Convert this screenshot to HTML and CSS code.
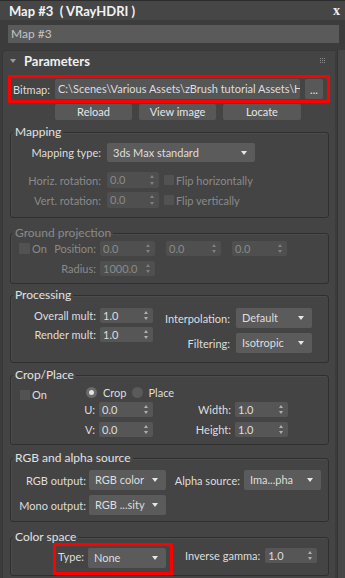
FILE: index.html
```html
<!DOCTYPE html>
<html lang="en">
<head>
<meta charset="utf-8">
<title>Map #3 ( VRayHDRI )</title>
<link rel="stylesheet" href="styles.css">
</head>
<body>

  <div class="titlebar">
    <span class="title">Map #3&nbsp; ( VRayHDRI )</span>
    <span class="close">x</span>
  </div>

  <div class="namebar">
    <div class="name-field">Map #3</div>
  </div>

  <div class="main">
    <div class="rollout">
      <div class="rollout-head">
        <span class="tri"></span>
        <span class="rollout-title">Parameters</span>
        <svg class="grip" width="6" height="6" viewBox="0 0 6 6">
          <g fill="#8a8a8a">
            <rect x="0" y="0" width="1" height="1"/><rect x="2" y="0" width="1" height="1"/><rect x="4" y="0" width="1" height="1"/>
            <rect x="0" y="2" width="1" height="1"/><rect x="2" y="2" width="1" height="1"/><rect x="4" y="2" width="1" height="1"/>
            <rect x="0" y="4" width="1" height="1"/><rect x="2" y="4" width="1" height="1"/><rect x="4" y="4" width="1" height="1"/>
          </g>
        </svg>
      </div>

      <div class="bitmap-row mark">
        <span class="bitmap-lab">Bitmap:</span>
        <div class="path-field">C:\Scenes\Various Assets\zBrush tutorial Assets\H</div>
        <div class="btn btn-dots">...</div>
      </div>

      <div class="btn-row">
        <div class="btn">Reload</div>
        <div class="btn">View image</div>
        <div class="btn btn-wide">Locate</div>
      </div>

      <fieldset class="group g-mapping">
        <legend>Mapping</legend>
        <div class="row r1">
          <span class="lab">Mapping type:</span>
          <div class="drop d-map">3ds Max standard</div>
        </div>
        <div class="row r2 off">
          <span class="lab">Horiz. rotation:</span>
          <div class="spin">0.0</div>
          <span class="chk"></span><span>Flip horizontally</span>
        </div>
        <div class="row r3 off">
          <span class="lab">Vert. rotation:</span>
          <div class="spin">0.0</div>
          <span class="chk"></span><span>Flip vertically</span>
        </div>
      </fieldset>

      <fieldset class="group g-ground off">
        <legend>Ground projection</legend>
        <div class="row">
          <span class="lab lab-split"><span class="chk"></span>On<span class="push">Position:</span></span>
          <div class="spin">0.0</div>
          <div class="spin">0.0</div>
          <div class="spin">0.0</div>
        </div>
        <div class="row r2">
          <span class="lab">Radius:</span>
          <div class="spin">1000.0</div>
        </div>
      </fieldset>

      <fieldset class="group g-proc">
        <legend>Processing</legend>
        <div class="cols">
          <div class="col col-left">
            <div class="row"><span class="lab">Overall mult:</span><div class="spin">1.0</div></div>
            <div class="row r2"><span class="lab">Render mult:</span><div class="spin">1.0</div></div>
          </div>
          <div class="col col-right">
            <div class="row"><span class="lab">Interpolation:</span><div class="drop">Default</div></div>
            <div class="row r2"><span class="lab">Filtering:</span><div class="drop">Isotropic</div></div>
          </div>
        </div>
      </fieldset>

      <fieldset class="group g-crop">
        <legend>Crop/Place</legend>
        <div class="row r1">
          <span class="on-cell"><span class="chk"></span>On</span>
          <span class="radio checked"></span><span class="radio-lab">Crop</span>
          <span class="radio"></span><span class="radio-lab">Place</span>
        </div>
        <div class="row r2">
          <span class="lab">U:</span><div class="spin s-left">0.0</div>
          <span class="lab lab2">Width:</span><div class="spin s-right">1.0</div>
        </div>
        <div class="row r3">
          <span class="lab">V:</span><div class="spin s-left">0.0</div>
          <span class="lab lab2">Height:</span><div class="spin s-right">1.0</div>
        </div>
      </fieldset>

      <fieldset class="group g-rgb">
        <legend>RGB and alpha source</legend>
        <div class="row">
          <span class="lab">RGB output:</span><div class="drop">RGB color</div>
          <span class="lab lab2">Alpha source:</span><div class="drop">Ima...pha</div>
        </div>
        <div class="row r2">
          <span class="lab">Mono output:</span><div class="drop">RGB ...sity</div>
        </div>
      </fieldset>

      <fieldset class="group g-color">
        <legend>Color space</legend>
        <div class="row">
          <div class="type-box mark">
            <span class="type-lab">Type:</span>
            <div class="drop">None</div>
          </div>
          <span class="lab gamma-lab">Inverse gamma:</span>
          <div class="spin">1.0</div>
        </div>
      </fieldset>
    </div>

    <div class="scroll"></div>
  </div>

</body>
</html>
```

FILE: styles.css
```css
body {
  margin: 0;
  width: 345px;
  height: 578px;
  overflow: hidden;
  background: #3c3c3c;
  font-family: Lato, "Liberation Sans", sans-serif;
  font-size: 11px;
  color: #dedede;
}

/* window chrome */
.titlebar {
  height: 20px;
  box-sizing: border-box;
  border-top: 1px solid #2c2c2c;
  background: #464646;
  display: flex;
  align-items: center;
  justify-content: space-between;
  padding: 0 5px 0 9px;
}
.title {
  font-weight: bold;
  font-size: 13px;
  color: #f2f2f2;
}
.close {
  font-family: "Liberation Serif", serif;
  font-weight: bold;
  font-size: 14px;
  color: #eee;
}
.namebar {
  padding: 5px 6px 0 8px;
}
.name-field {
  height: 18px;
  line-height: 18px;
  background: #5a5a5a;
  padding-left: 3px;
  color: #c4c4c4;
  font-size: 12px;
}

.main {
  display: flex;
  margin-top: 7px;
  height: 528px;
}
.rollout {
  width: 333px;
  margin-left: 2px;
  box-sizing: border-box;
  background: #444;
  border-left: 1px solid #383838;
  border-top: 1px solid #383838;
  border-radius: 4px 0 0 0;
}
.scroll {
  flex: 1;
  margin-left: 2px;
  background: #474747;
  border-left: 1px solid #333;
}

.rollout-head {
  height: 19px;
  display: flex;
  align-items: center;
  padding-left: 7px;
}
.tri {
  width: 0;
  height: 0;
  border-left: 3px solid transparent;
  border-right: 3px solid transparent;
  border-top: 4px solid #9a9a9a;
  margin-right: 8px;
}
.rollout-title {
  font-weight: bold;
  font-size: 13px;
  color: #f0f0f0;
}
.grip {
  margin-left: auto;
  margin-right: 9px;
}

/* red highlight boxes */
.mark {
  border: 3px solid #f00;
  box-sizing: border-box;
}

.bitmap-row {
  width: 322px;
  height: 28px;
  margin: 5px 0 0 5px;
  display: flex;
  align-items: center;
  padding: 0 4px 0 2px;
}
.bitmap-lab {
  width: 42px;
  flex: none;
}
.path-field {
  width: 245px;
  height: 20px;
  line-height: 20px;
  flex: none;
  box-sizing: border-box;
  background: #565656;
  padding-left: 3px;
  margin-right: 5px;
  white-space: nowrap;
  overflow: hidden;
  border-radius: 2px;
}
.btn {
  height: 16px;
  width: 77px;
  line-height: 16px;
  text-align: center;
  background: #585858;
  border-radius: 2px;
  color: #e6e6e6;
}
.btn-wide {
  width: 78px;
}
.btn-dots {
  width: 18px;
  height: 20px;
  line-height: 22px;
}
.btn-row {
  display: flex;
  gap: 7px;
  margin: 1px 0 0 52px;
}

/* group boxes */
.group {
  margin: 6px 6px 0 7px;
  padding: 0;
  border: 1px solid #2f2f2f;
  border-radius: 3px;
  box-shadow: inset 1px 1px 0 #4c4c4c;
  min-inline-size: 0;
}
.group legend {
  padding: 0 2px;
  margin-left: 2px;
  line-height: 12px;
  font-size: 12px;
  color: #e2e2e2;
}
.row {
  display: flex;
  align-items: center;
}
.lab {
  flex: none;
  text-align: right;
}
.off,
.off legend {
  color: #8a8a8a;
}

.spin {
  position: relative;
  flex: none;
  height: 15px;
  line-height: 15px;
  box-sizing: border-box;
  background: #565656;
  border-radius: 2px;
  padding-left: 3px;
}
.spin::before,
.spin::after {
  content: "";
  position: absolute;
  right: 5px;
  border-left: 2.5px solid transparent;
  border-right: 2.5px solid transparent;
}
.spin::before {
  top: 3px;
  border-bottom: 3px solid #b0b0b0;
}
.spin::after {
  bottom: 3px;
  border-top: 3px solid #b0b0b0;
}
.off .spin {
  background: #4f4f4f;
}
.off .spin::before {
  border-bottom-color: #808080;
}
.off .spin::after {
  border-top-color: #808080;
}

.drop {
  position: relative;
  flex: none;
  height: 20px;
  line-height: 20px;
  box-sizing: border-box;
  background: #5b5b5b;
  border-radius: 2px;
  padding-left: 6px;
}
.drop::after {
  content: "";
  position: absolute;
  right: 8px;
  top: 8px;
  border-left: 3px solid transparent;
  border-right: 3px solid transparent;
  border-top: 4px solid #e6e6e6;
}

.chk {
  flex: none;
  width: 11px;
  height: 11px;
  background: #525252;
  margin-right: 2px;
}
.radio {
  flex: none;
  width: 11px;
  height: 11px;
  border-radius: 50%;
  background: #5a5a5a;
  margin-right: 6px;
  box-sizing: border-box;
}
.radio.checked {
  background: #e4e4e4;
  border: 3px solid #6a6a6a;
}

/* Mapping */
.g-mapping .r1 {
  margin-top: 5px;
}
.g-mapping .lab {
  width: 90px;
  margin-right: 6px;
}
.g-mapping .d-map {
  width: 148px;
  height: 19px;
  line-height: 19px;
}
.g-mapping .spin {
  width: 52px;
  height: 16px;
  line-height: 16px;
  margin-right: 5px;
}
.g-mapping .chk {
  width: 10px;
  height: 10px;
}
.g-mapping .r2 {
  margin-top: 10px;
}
.g-mapping .r3 {
  margin-top: 4px;
  margin-bottom: 9px;
}

/* Ground projection */
.g-ground {
  margin-top: 9px;
}
.g-ground .row {
  margin-top: 2px;
  gap: 11px;
}
.g-ground .lab {
  width: 85px;
  margin-right: -7px;
}
.g-ground .lab-split {
  display: flex;
  align-items: center;
  padding-left: 8px;
  box-sizing: border-box;
}
.g-ground .push {
  margin-left: auto;
}
.g-ground .spin {
  width: 55px;
}
.g-ground .r2 {
  margin-top: 5px;
  margin-bottom: 7px;
}

/* Processing */
.g-proc {
  margin-top: 5px;
}
.cols {
  display: flex;
  margin: 7px 0 9px;
}
.col-left .lab {
  width: 85px;
  margin-right: 4px;
}
.col-left .spin {
  width: 53px;
}
.col-left .r2 {
  margin-top: 4px;
}
.col-right .lab {
  width: 77px;
  margin-right: 6px;
}
.col-right .drop {
  width: 76px;
}
.col-right .r2 {
  margin-top: 5px;
}

/* Crop/Place */
.g-crop .r1 {
  height: 12px;
  margin-top: 5px;
}
.on-cell {
  width: 75px;
  flex: none;
  display: flex;
  align-items: center;
  padding-left: 9px;
  box-sizing: border-box;
  margin-top: 5px;
}
.on-cell .chk {
  width: 10px;
  height: 10px;
}
.radio-lab {
  margin-right: 5px;
}
.g-crop .lab {
  width: 84px;
  margin-right: 4px;
}
.g-crop .lab2 {
  width: 78px;
}
.g-crop .s-left {
  width: 54px;
}
.g-crop .s-right {
  width: 53px;
}
.g-crop .r2 {
  margin-top: 4px;
}
.g-crop .r3 {
  margin-top: 5px;
  margin-bottom: 7px;
}

/* RGB and alpha source */
.g-rgb {
  margin-top: 7px;
}
.g-rgb .row {
  margin-top: 6px;
}
.g-rgb .lab {
  width: 75px;
  margin-right: 3px;
}
.g-rgb .lab2 {
  width: 74px;
  margin-right: 4px;
}
.g-rgb .drop {
  width: 77px;
}
.g-rgb .r2 {
  margin-top: 5px;
  margin-bottom: 6px;
}

/* Color space */
.g-color {
  margin-top: 9px;
}
.g-color .row {
  align-items: flex-start;
}
.type-box {
  width: 120px;
  height: 32px;
  margin-left: 42px;
  display: flex;
  align-items: flex-start;
  padding: 2px 4px 0 2px;
}
.type-lab {
  width: 30px;
  flex: none;
  line-height: 18px;
}
.type-box .drop {
  width: 78px;
}
.gamma-lab {
  margin: 5px 5px 0 12px;
  line-height: 15px;
}
.g-color .spin {
  width: 52px;
  margin-top: 5px;
}
```
